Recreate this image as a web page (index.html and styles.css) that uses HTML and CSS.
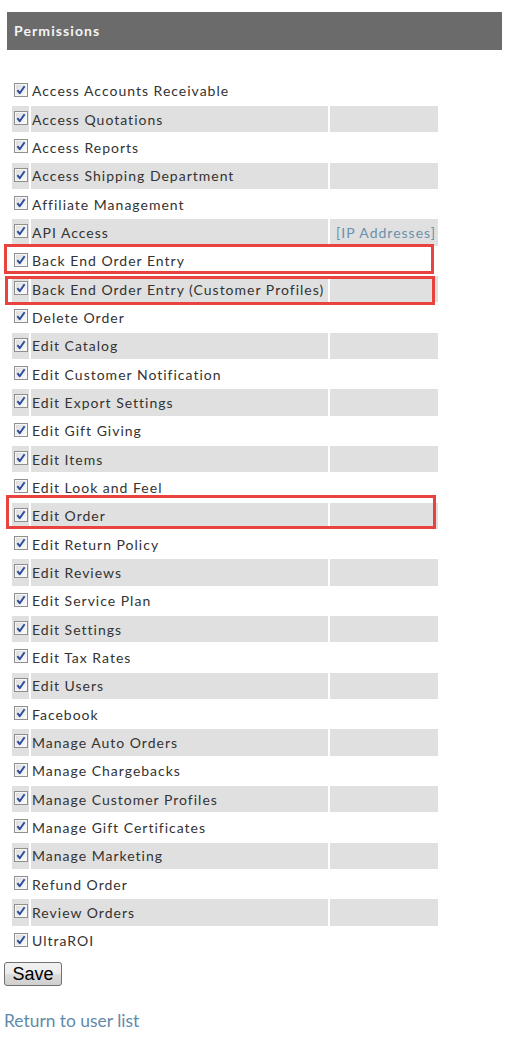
FILE: index.html
```html
<!DOCTYPE html>
<html>
<head>
<meta charset="utf-8">
<title>Permissions</title>
<link rel="stylesheet" href="styles.css">
</head>
<body>
<svg class="defs" width="0" height="0" aria-hidden="true">
  <defs>
    <linearGradient id="cbg" x1="0" y1="0" x2="1" y2="1">
      <stop offset="0" stop-color="#dcdcdc"/>
      <stop offset="1" stop-color="#fbfbfb"/>
    </linearGradient>
    <symbol id="cb" viewBox="0 0 14 14">
      <rect x="0.5" y="0.5" width="13" height="13" fill="#f6f6f6" stroke="#8e8f8f"/>
      <rect x="2" y="2" width="10" height="10" fill="url(#cbg)"/>
      <path d="M3.4 7.2 L5.7 10.2 L10.6 3.2" stroke="#2c4d9b" stroke-width="2" fill="none" stroke-linejoin="round"/>
    </symbol>
  </defs>
</svg>

<div class="header">Permissions</div>

<div class="perm-wrap">
<table class="perms">
  <tbody>
    <tr><td class="c"><svg class="cb"><use href="#cb"/></svg></td><td class="l">Access Accounts Receivable</td><td class="x"></td></tr>
    <tr><td class="c"><svg class="cb"><use href="#cb"/></svg></td><td class="l">Access Quotations</td><td class="x"></td></tr>
    <tr><td class="c"><svg class="cb"><use href="#cb"/></svg></td><td class="l">Access Reports</td><td class="x"></td></tr>
    <tr><td class="c"><svg class="cb"><use href="#cb"/></svg></td><td class="l">Access Shipping Department</td><td class="x"></td></tr>
    <tr><td class="c"><svg class="cb"><use href="#cb"/></svg></td><td class="l">Affiliate Management</td><td class="x"></td></tr>
    <tr><td class="c"><svg class="cb"><use href="#cb"/></svg></td><td class="l">API Access</td><td class="x"><a class="ip" href="#">[IP Addresses]</a></td></tr>
    <tr><td class="c"><svg class="cb"><use href="#cb"/></svg></td><td class="l">Back End Order Entry</td><td class="x"></td></tr>
    <tr><td class="c"><svg class="cb"><use href="#cb"/></svg></td><td class="l">Back End Order Entry (Customer Profiles)</td><td class="x"></td></tr>
    <tr><td class="c"><svg class="cb"><use href="#cb"/></svg></td><td class="l">Delete Order</td><td class="x"></td></tr>
    <tr><td class="c"><svg class="cb"><use href="#cb"/></svg></td><td class="l">Edit Catalog</td><td class="x"></td></tr>
    <tr><td class="c"><svg class="cb"><use href="#cb"/></svg></td><td class="l">Edit Customer Notification</td><td class="x"></td></tr>
    <tr><td class="c"><svg class="cb"><use href="#cb"/></svg></td><td class="l">Edit Export Settings</td><td class="x"></td></tr>
    <tr><td class="c"><svg class="cb"><use href="#cb"/></svg></td><td class="l">Edit Gift Giving</td><td class="x"></td></tr>
    <tr><td class="c"><svg class="cb"><use href="#cb"/></svg></td><td class="l">Edit Items</td><td class="x"></td></tr>
    <tr><td class="c"><svg class="cb"><use href="#cb"/></svg></td><td class="l">Edit Look and Feel</td><td class="x"></td></tr>
    <tr><td class="c"><svg class="cb"><use href="#cb"/></svg></td><td class="l">Edit Order</td><td class="x"></td></tr>
    <tr><td class="c"><svg class="cb"><use href="#cb"/></svg></td><td class="l">Edit Return Policy</td><td class="x"></td></tr>
    <tr><td class="c"><svg class="cb"><use href="#cb"/></svg></td><td class="l">Edit Reviews</td><td class="x"></td></tr>
    <tr><td class="c"><svg class="cb"><use href="#cb"/></svg></td><td class="l">Edit Service Plan</td><td class="x"></td></tr>
    <tr><td class="c"><svg class="cb"><use href="#cb"/></svg></td><td class="l">Edit Settings</td><td class="x"></td></tr>
    <tr><td class="c"><svg class="cb"><use href="#cb"/></svg></td><td class="l">Edit Tax Rates</td><td class="x"></td></tr>
    <tr><td class="c"><svg class="cb"><use href="#cb"/></svg></td><td class="l">Edit Users</td><td class="x"></td></tr>
    <tr><td class="c"><svg class="cb"><use href="#cb"/></svg></td><td class="l">Facebook</td><td class="x"></td></tr>
    <tr><td class="c"><svg class="cb"><use href="#cb"/></svg></td><td class="l">Manage Auto Orders</td><td class="x"></td></tr>
    <tr><td class="c"><svg class="cb"><use href="#cb"/></svg></td><td class="l">Manage Chargebacks</td><td class="x"></td></tr>
    <tr><td class="c"><svg class="cb"><use href="#cb"/></svg></td><td class="l">Manage Customer Profiles</td><td class="x"></td></tr>
    <tr><td class="c"><svg class="cb"><use href="#cb"/></svg></td><td class="l">Manage Gift Certificates</td><td class="x"></td></tr>
    <tr><td class="c"><svg class="cb"><use href="#cb"/></svg></td><td class="l">Manage Marketing</td><td class="x"></td></tr>
    <tr><td class="c"><svg class="cb"><use href="#cb"/></svg></td><td class="l">Refund Order</td><td class="x"></td></tr>
    <tr><td class="c"><svg class="cb"><use href="#cb"/></svg></td><td class="l">Review Orders</td><td class="x"></td></tr>
    <tr><td class="c"><svg class="cb"><use href="#cb"/></svg></td><td class="l">UltraROI</td><td class="x"></td></tr>
  </tbody>
</table>
<div class="mark mark-1"></div>
<div class="mark mark-2"></div>
<div class="mark mark-3"></div>
</div>

<button class="save" type="button">Save</button>

<a class="back" href="#">Return to user list</a>
</body>
</html>
```

FILE: styles.css
```css
html, body {
  margin: 0;
  padding: 0;
  background: #ffffff;
}

body {
  width: 517px;
  font-family: Lato, "Open Sans", sans-serif;
  color: #333333;
}

.defs {
  position: absolute;
  width: 0;
  height: 0;
  overflow: hidden;
}

.header {
  margin: 12px 15px 0 7px;
  height: 38px;
  box-sizing: border-box;
  padding-left: 7px;
  background: #6b6b6b;
  color: #f4f4f4;
  font-weight: 700;
  font-size: 14px;
  letter-spacing: 1.1px;
  line-height: 37px;
}

.perm-wrap {
  position: relative;
  margin-top: 25.67px;
  padding-left: 10px;
}

.perms {
  border-collapse: separate;
  border-spacing: 2px;
  width: 430px;
  table-layout: fixed;
  font-size: 14px;
  letter-spacing: 1px;
}

.perms tr {
  height: 26.33px;
}

.perms td {
  padding: 0;
  vertical-align: middle;
  white-space: nowrap;
}

.perms tr:nth-child(even) td {
  background: #e0e0e0;
}

.perms td.c {
  width: 17px;
  padding-left: 2px;
  box-sizing: border-box;
}

.perms td.l {
  width: 297px;
  padding-left: 1px;
  box-sizing: border-box;
}

.perms td.x {
  width: 108px;
  text-align: right;
  padding-right: 2px;
  box-sizing: border-box;
}

.cb {
  display: block;
  width: 14px;
  height: 14px;
  margin-top: -2px;
}

.ip {
  color: #6a90ad;
  text-decoration: none;
}

.mark {
  position: absolute;
  border: 3px solid #e8433e;
  box-sizing: border-box;
  pointer-events: none;
}

.mark-1 {
  left: 4px;
  top: 168.33px;
  width: 430px;
  height: 30px;
}

.mark-2 {
  left: 5px;
  top: 200.33px;
  width: 430px;
  height: 29px;
}

.mark-3 {
  left: 6px;
  top: 419.33px;
  width: 430px;
  height: 34px;
}

.save {
  display: block;
  margin: 6px 0 0 4px;
  width: 58px;
  height: 24px;
  padding: 0;
  border: 1px solid #707070;
  border-radius: 3px;
  background: linear-gradient(#f2f2f2 0%, #ebebeb 50%, #dddddd 51%, #cfcfcf 100%);
  font-family: "Liberation Sans", Arial, sans-serif;
  font-size: 18px;
  color: #000000;
  line-height: 22px;
}

.back {
  display: inline-block;
  margin: 24px 0 0 4px;
  font-family: Lato, "Open Sans", sans-serif;
  font-size: 17.4px;
  line-height: 22px;
  color: #5f8aab;
  text-decoration: none;
}
```
